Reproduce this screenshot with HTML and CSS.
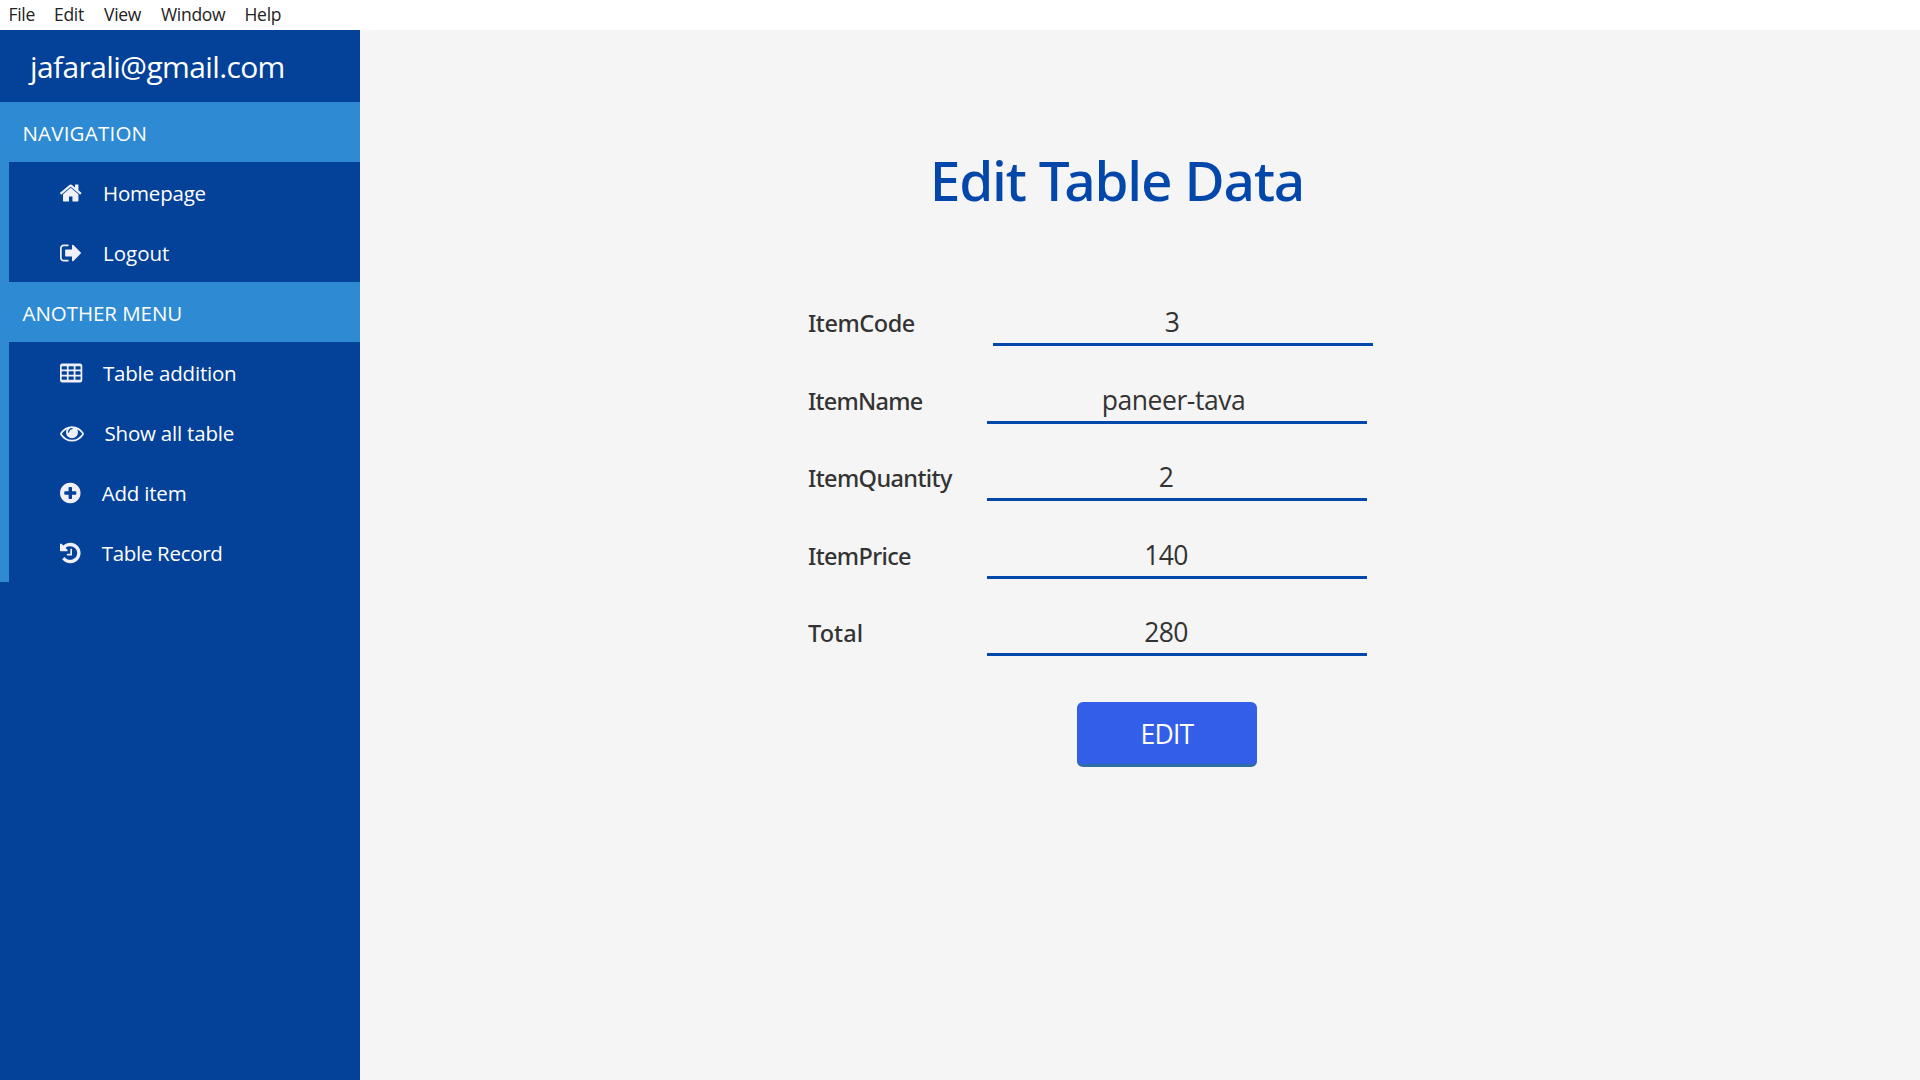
FILE: index.html
```html
<!DOCTYPE html>
<html lang="en">
<head>
<meta charset="utf-8">
<title>Edit Table Data</title>
<link rel="stylesheet" href="styles.css">
</head>
<body>
<nav class="menubar"><span class="m-file">File</span><span class="m-edit">Edit</span><span class="m-view">View</span><span class="m-window">Window</span><span class="m-help">Help</span></nav>
<div class="layout">
  <aside class="sidebar">
    <div class="account"><span>jafarali@gmail.com</span></div>
    <h2 class="section wide">NAVIGATION</h2>
    <ul class="links">
      <li><svg class="icon" viewBox="96 0 1792 1792"><path d="M1472 992v480q0 26-19 45t-45 19h-384v-384h-256v384h-384q-26 0-45-19t-19-45v-480q0-1 .5-3t.5-3l575-474 575 474q1 2 1 6zm223-69l-62 74q-8 9-21 11h-3q-13 0-21-7l-692-577-692 577q-12 8-24 7-13-2-21-11l-62-74q-8-10-7-23.5t11-21.5l719-599q32-26 76-26t76 26l244 204v-195q0-14 9-23t23-9h192q14 0 23 9t9 23v408l219 182q10 8 11 21.5t-7 23.5z"/></svg><a class="home">Homepage</a></li>
      <li><svg class="icon" viewBox="64 0 1792 1792"><path d="M704 1440q0 4 1 20t.5 26.5-3 23.5-10 19.5-20.5 6.5h-320q-119 0-203.5-84.5t-84.5-203.5v-704q0-119 84.5-203.5t203.5-84.5h320q13 0 22.5 9.5t9.5 22.5q0 4 1 20t.5 26.5-3 23.5-10 19.5-20.5 6.5h-320q-66 0-113 47t-47 113v704q0 66 47 113t113 47h312l11.5 1 11.5 3 8 5.5 7 9 2 13.5zm928-544q0 26-19 45l-544 544q-19 19-45 19t-45-19-19-45v-288h-448q-26 0-45-19t-19-45v-384q0-26 19-45t45-19h448v-288q0-26 19-45t45-19 45 19l544 544q19 19 19 45z"/></svg><a class="logout">Logout</a></li>
    </ul>
    <h2 class="section">ANOTHER MENU</h2>
    <ul class="links">
      <li><svg class="icon" viewBox="64 0 1792 1792"><path fill-rule="evenodd" d="M1728 352v1088q0 66-47 113t-113 47h-1344q-66 0-113-47t-47-113v-1088q0-66 47-113t113-47h1344q66 0 113 47t47 113zM224 384h320q32 0 32 32v192q0 32-32 32h-320q-32 0-32-32v-192q0-32 32-32zM736 384h320q32 0 32 32v192q0 32-32 32h-320q-32 0-32-32v-192q0-32 32-32zM1248 384h320q32 0 32 32v192q0 32-32 32h-320q-32 0-32-32v-192q0-32 32-32zM224 768h320q32 0 32 32v192q0 32-32 32h-320q-32 0-32-32v-192q0-32 32-32zM736 768h320q32 0 32 32v192q0 32-32 32h-320q-32 0-32-32v-192q0-32 32-32zM1248 768h320q32 0 32 32v192q0 32-32 32h-320q-32 0-32-32v-192q0-32 32-32zM224 1152h320q32 0 32 32v192q0 32-32 32h-320q-32 0-32-32v-192q0-32 32-32zM736 1152h320q32 0 32 32v192q0 32-32 32h-320q-32 0-32-32v-192q0-32 32-32zM1248 1152h320q32 0 32 32v192q0 32-32 32h-320q-32 0-32-32v-192q0-32 32-32z"/></svg><a class="add-table">Table addition</a></li>
      <li><svg class="icon" viewBox="0 0 1792 1792"><path d="M1664 960q-152-236-381-353 61 104 61 225 0 185-131.5 316.5t-316.5 131.5-316.5-131.5-131.5-316.5q0-121 61-225-229 117-381 353 133 205 333.5 326.5t434.5 121.5 434.5-121.5 333.5-326.5zm-720-384q0-20-14-34t-34-14q-125 0-214.5 89.5t-89.5 214.5q0 20 14 34t34 14 34-14 14-34q0-86 61-147t147-61q20 0 34-14t14-34zm848 384q0 34-20 69-140 230-376.5 368.5t-499.5 138.5-499.5-139-376.5-368q-20-35-20-69t20-69q140-229 376.5-368t499.5-139 499.5 139 376.5 368q20 35 20 69z"/></svg><a class="show-all">Show all table</a></li>
      <li><svg class="icon" viewBox="128 0 1792 1792"><path d="M1344 960v-128q0-26-19-45t-45-19h-256v-256q0-26-19-45t-45-19h-128q-26 0-45 19t-19 45v256h-256q-26 0-45 19t-19 45v128q0 26 19 45t45 19h256v256q0 26 19 45t45 19h128q26 0 45-19t19-45v-256h256q26 0 45-19t19-45zm320-64q0 209-103 385.5t-279.5 279.5-385.5 103-385.5-103-279.5-279.5-103-385.5 103-385.5 279.5-279.5 385.5-103 385.5 103 279.5 279.5 103 385.5z"/></svg><a class="add-item">Add item</a></li>
      <li><svg class="icon" viewBox="128 0 1792 1792"><path d="M1664 896q0 156-61 298t-164 245-245 164-298 61q-172 0-327-72.5t-264-204.5q-7-10-6.5-22.5t8.5-20.5l137-138q10-9 25-9 16 2 23 12 73 95 179 147t225 52q104 0 198.5-40.5t163.5-109.5 109.5-163.5 40.5-198.5-40.5-198.5-109.5-163.5-163.5-109.5-198.5-40.5q-98 0-188 35.5t-160 101.5l137 138q31 30 14 69-17 40-59 40h-448q-26 0-45-19t-19-45v-448q0-42 40-59 39-17 69 14l130 129q107-101 244.5-156.5t284.5-55.5q156 0 298 61t245 164 164 245 61 298zm-640-288v448q0 14-9 23t-23 9h-320q-14 0-23-9t-9-23v-64q0-14 9-23t23-9h224v-352q0-14 9-23t23-9h64q14 0 23 9t9 23z"/></svg><a class="record">Table Record</a></li>
    </ul>
  </aside>
  <main class="content">
    <h1 class="title">Edit Table Data</h1>
    <form class="form">
      <div class="row first"><label class="code">ItemCode</label><div class="field">3</div></div>
      <div class="row"><label class="name">ItemName</label><div class="field text">paneer-tava</div></div>
      <div class="row"><label class="quantity">ItemQuantity</label><div class="field">2</div></div>
      <div class="row"><label class="price">ItemPrice</label><div class="field">140</div></div>
      <div class="row"><label class="total">Total</label><div class="field">280</div></div>
      <button type="button" class="submit">EDIT</button>
    </form>
  </main>
</div>
</body>
</html>
```
FILE: styles.css
```css
* { box-sizing: border-box; }
body {
  margin: 0;
  height: 1080px;
  display: flex;
  flex-direction: column;
  overflow: hidden;
  font-family: "Open Sans", "Noto Sans", sans-serif;
  background: #f5f5f5;
}
.menubar {
  flex: none;
  height: 30px;
  padding-left: 8.5px;
  display: flex;
  background: #fff;
  color: #222;
  font-size: 17.5px;
  line-height: 28px;
  letter-spacing: -0.3px;
}
.menubar span { flex: none; }
.m-file { width: 45.5px; }
.m-edit { width: 50px; }
.m-view { width: 57px; }
.m-window { width: 83.5px; }
.layout { flex: 1; display: flex; min-height: 0; }
.sidebar { flex: none; width: 360px; background: #044199; color: #fff; }
.account {
  height: 72px;
  padding-left: 30px;
  font-size: 30px;
  line-height: 74px;
  letter-spacing: -0.62px;
}
.section {
  margin: 0;
  height: 60px;
  padding-left: 22.5px;
  background: #2d8ad3;
  font-size: 20.5px;
  font-weight: 400;
  line-height: 62px;
  letter-spacing: -0.05px;
}
.section.wide { padding-left: 22.4px; letter-spacing: 0.22px; }
.links {
  margin: 0;
  padding: 0;
  list-style: none;
  border-left: 9px solid #2d8ad3;
  font-size: 20.5px;
  line-height: 62px;
  letter-spacing: -0.2px;
}
.links li { display: flex; height: 60px; padding-left: 51px; }
.icon { flex: none; width: 24px; height: 24px; margin-top: 18.5px; fill: #f0f0f8; }
.links a { margin-left: 19px; }
.links .logout { letter-spacing: 0; }
.links .show-all { margin-left: 20.5px; }
.links .add-item { margin-left: 17.7px; }
.links .record { margin-left: 17.7px; letter-spacing: -0.3px; }
.content {
  flex: 1;
  padding: 115px 0 0 448px;
  color: #333;
}
.title {
  margin: 0 0 0 121.7px;
  height: 153px;
  color: #0447ab;
  font-family: "Noto Sans", sans-serif;
  font-size: 55px;
  font-weight: 500;
  line-height: 70px;
  letter-spacing: -1.17px;
}
.form { display: flex; flex-direction: column; gap: 29.5px; }
.row { display: grid; grid-template-columns: 179px 380px; height: 48px; }
.row.first { grid-template-columns: 185px 380px; }
.row label {
  font-family: "Noto Sans", sans-serif;
  font-size: 23.5px;
  font-weight: 500;
  line-height: 51px;
  letter-spacing: -0.45px;
}
.row .name { letter-spacing: -0.76px; }
.row .quantity { letter-spacing: -0.62px; }
.row .price { letter-spacing: -0.65px; }
.row .total { letter-spacing: 0.1px; }
.field {
  height: 48px;
  padding-right: 22px;
  border-bottom: 3px solid #0447ab;
  font-size: 26.5px;
  line-height: 49px;
  letter-spacing: -0.6px;
  text-align: center;
}
.field.text { padding-right: 7px; letter-spacing: -0.43px; }
.submit {
  width: 180px;
  height: 65px;
  margin: 16.5px 0 0 269px;
  padding: 2px 0 0;
  border: 0;
  border-bottom: 3px solid #2f6ea5;
  border-radius: 6px;
  background: #325ee8;
  color: #fff;
  font: 26.5px/60px "Open Sans", sans-serif;
  letter-spacing: -0.8px;
}
```
